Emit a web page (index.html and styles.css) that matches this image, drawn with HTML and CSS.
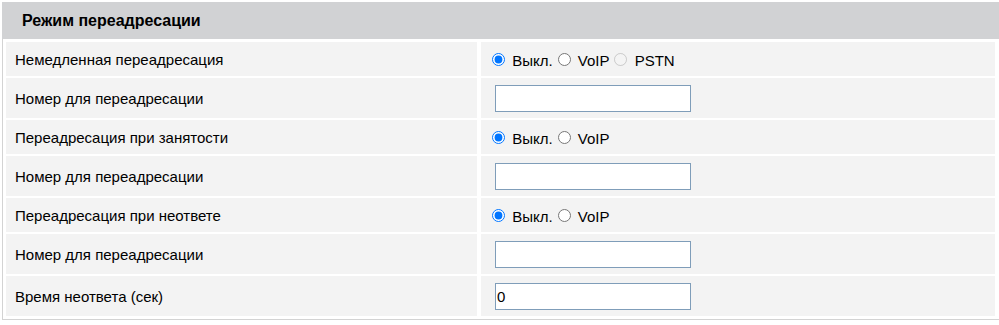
FILE: index.html
```html
<!DOCTYPE html>
<html lang="ru">

<head>
  <meta charset="UTF-8">
  <meta name="viewport" content="width=device-width, initial-scale=1.0">
  <title>Режим переадресации</title>

  <link rel="stylesheet" href="styles.css">
</head>

<body>
  <div class="panel">
    <div class="panel-title">Режим переадресации</div>

    <div class="panel-body">
      <div class="cell label row-radio">Немедленная переадресация</div>
      <div class="cell value row-radio">
        <span class="choices"><input type="radio" name="fwd_all" checked> Выкл.<input type="radio" name="fwd_all"> VoIP<input type="radio" name="fwd_all" disabled> PSTN</span>
      </div>

      <div class="cell label row-input">Номер для переадресации</div>
      <div class="cell value row-input">
        <input class="text-field" type="text">
      </div>

      <div class="cell label row-radio">Переадресация при занятости</div>
      <div class="cell value row-radio">
        <span class="choices"><input type="radio" name="fwd_busy" checked> Выкл.<input type="radio" name="fwd_busy"> VoIP</span>
      </div>

      <div class="cell label row-input">Номер для переадресации</div>
      <div class="cell value row-input">
        <input class="text-field" type="text">
      </div>

      <div class="cell label row-radio">Переадресация при неответе</div>
      <div class="cell value row-radio">
        <span class="choices"><input type="radio" name="fwd_noans" checked> Выкл.<input type="radio" name="fwd_noans"> VoIP</span>
      </div>

      <div class="cell label row-input">Номер для переадресации</div>
      <div class="cell value row-input">
        <input class="text-field" type="text">
      </div>

      <div class="cell label row-input">Время неответа (сек)</div>
      <div class="cell value row-input">
        <input class="text-field" type="text" value="0">
      </div>
    </div>
  </div>
</body>

</html>
```

FILE: styles.css
```css
body {
  margin: 0;
  font-family: "Liberation Sans", Arial, sans-serif;
  font-size: 15px;
  color: #000;
  background-color: #FFF;
}

.panel {
  margin: 2px 0 0 2px;
  width: 997px;
}

.panel-title {
  height: 37px;
  line-height: 37px;
  padding-left: 20px;
  background-color: #d1d2d4;
  font-size: 16px;
  font-weight: bold;
}

.panel-body {
  display: grid;
  grid-template-columns: 471px 514px;
  gap: 2px 4px;
  padding: 3px 3px 3px 3px;
  border-left: 1px solid #d3d3d3;
  border-bottom: 1px solid #d3d3d3;
}

.cell {
  display: flex;
  align-items: center;
  background-color: #f3f3f3;
}

.label {
  padding-left: 9px;
}

.value {
  padding-left: 6px;
}

.row-radio {
  height: 34px;
}

.row-input {
  height: 40px;
}

.choices input[type="radio"] {
  margin: 3px 3px 0 5px;
}

.text-field {
  box-sizing: border-box;
  width: 196px;
  height: 27px;
  margin: 1px 0 0 8px;
  padding: 0 1px;
  border: 1px solid #7f9db9;
  font-family: "Liberation Sans", Arial, sans-serif;
  font-size: 15px;
  outline: none;
}
```
